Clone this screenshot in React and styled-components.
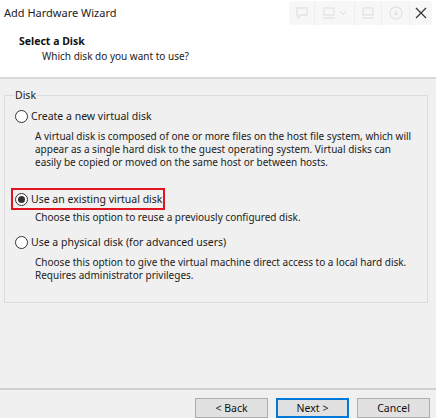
import React from 'react';
import styled, { createGlobalStyle } from 'styled-components';

const Global = createGlobalStyle`
  html, body {
    margin: 0;
    padding: 0;
    background: #f0f0f0;
  }
  body {
    font-family: "Noto Sans", "Open Sans", sans-serif;
    font-size: 10px;
    letter-spacing: 0;
    color: #1a1a1a;
  }
`;

const Window = styled.div`
  width: 436px;
  height: 418px;
  display: flex;
  flex-direction: column;
  overflow: hidden;
  background: #f0f0f0;
`;

const Top = styled.div`
  background: #fff;
  height: 77px;
  border-bottom: 2px solid #d9d9d9;
  display: flex;
  flex-direction: column;
`;

const TitleBar = styled.div`
  height: 25px;
  display: flex;
  align-items: center;
  padding-left: 4px;
  position: relative;
`;

const TitleText = styled.span`
  font-size: 11px;
  color: #222;
  margin-top: -1px;
`;

const Overlay = styled.div`
  position: absolute;
  right: 4px;
  top: 1px;
  height: 24px;
  width: 143px;
  border-radius: 4px;
  background: #f7f7f7;
  display: flex;
  align-items: center;
`;

const OverlayCell = styled.div`
  height: 100%;
  width: ${p => p.w}px;
  display: flex;
  align-items: center;
  justify-content: center;
  gap: 3px;
  border-right: ${p => (p.last ? 'none' : '1px solid #efefef')};
`;

const Header = styled.div`
  padding: 9px 0 0 19px;
`;

const HeaderTitle = styled.div`
  font-weight: bold;
  font-size: 10.5px;
  color: #111;
  line-height: 14px;
`;

const HeaderSub = styled.div`
  padding-left: 23px;
  line-height: 16px;
  color: #222;
`;

const Body = styled.div`
  flex: 1;
  padding: 9px 8px 0 4px;
`;

const Group = styled.fieldset`
  margin: 0;
  padding: 0 0 0 9px;
  height: 215px;
  border: 1px solid #dcdcdc;
  box-sizing: border-box;
`;

const Legend = styled.legend`
  padding: 0 1px;
  margin-left: 0;
  color: #222;
  font-size: 10.5px;
  line-height: 14px;
`;

const Option = styled.div`
  margin-top: ${p => p.top}px;
`;

const RadioLabel = styled.div`
  display: inline-flex;
  align-items: center;
  gap: 3px;
  padding: 2px 1px 2px 2px;
  border: 2px solid ${p => (p.highlight ? '#e0141e' : 'transparent')};
  margin-left: -3px;
  line-height: 14px;
  font-size: 10.5px;
`;

const Radio = styled.span`
  width: 11px;
  height: 11px;
  border-radius: 50%;
  border: 1px solid #333;
  background: #fff;
  display: inline-flex;
  align-items: center;
  justify-content: center;
  box-sizing: content-box;
  &::after {
    content: '';
    width: 7px;
    height: 7px;
    border-radius: 50%;
    background: ${p => (p.checked ? '#333' : 'transparent')};
  }
`;

const Desc = styled.div`
  padding-left: 21px;
  margin-top: ${p => p.gap ?? 3}px;
  line-height: 13px;
  color: #222;
  white-space: nowrap;
`;

const Footer = styled.div`
  border-top: 2px solid #d0d0d0;
  height: 20px;
  display: flex;
  justify-content: flex-end;
  align-items: flex-start;
  gap: 8px;
  padding: 8px 6px 0 0;
`;

const Button = styled.button`
  width: 73px;
  height: 20px;
  box-sizing: border-box;
  background: #e1e1e1;
  border: 1px solid ${p => (p.primary ? '#0078d7' : '#adadad')};
  box-shadow: ${p => (p.primary ? 'inset 0 0 0 1px #0078d7' : 'none')};
  font-family: inherit;
  font-size: 10.5px;
  letter-spacing: inherit;
  color: #111;
  padding: 0;
`;

const Bubble = () => (
  <svg width="14" height="14" viewBox="0 0 14 14" fill="none" stroke="#e4e4e4" strokeWidth="1.3">
    <path d="M2 2h10v7H6l-3 3V9H2z" />
  </svg>
);

const Screen = () => (
  <svg width="14" height="14" viewBox="0 0 14 14" fill="none" stroke="#e4e4e4" strokeWidth="1.3">
    <rect x="2" y="2" width="10" height="7" />
    <path d="M1 12h12" />
  </svg>
);

const Chevron = () => (
  <svg width="8" height="8" viewBox="0 0 8 8" fill="none" stroke="#e4e4e4" strokeWidth="1.2">
    <path d="M1 2.5l3 3 3-3" />
  </svg>
);

const Download = () => (
  <svg width="14" height="14" viewBox="0 0 14 14" fill="none" stroke="#e4e4e4" strokeWidth="1.3">
    <circle cx="7" cy="7" r="6" />
    <path d="M7 4v5M4.8 7l2.2 2.2L9.2 7" />
  </svg>
);

const Close = () => (
  <svg width="12" height="12" viewBox="0 0 12 12" fill="none" stroke="#333" strokeWidth="1.2">
    <path d="M1 1l10 10M11 1L1 11" />
  </svg>
);

export default function App() {
  return (
    <Window>
      <Global />
      <Top>
        <TitleBar>
          <TitleText>Add Hardware Wizard</TitleText>
          <Overlay>
            <OverlayCell w={26}><Bubble /></OverlayCell>
            <OverlayCell w={40}><Screen /><Chevron /></OverlayCell>
            <OverlayCell w={27}><Screen /></OverlayCell>
            <OverlayCell w={27}><Download /></OverlayCell>
            <OverlayCell w={23} last><Close /></OverlayCell>
          </Overlay>
        </TitleBar>
        <Header>
          <HeaderTitle>Select a Disk</HeaderTitle>
          <HeaderSub>Which disk do you want to use?</HeaderSub>
        </Header>
      </Top>
      <Body>
        <Group>
          <Legend>Disk</Legend>
          <Option top={3}>
            <RadioLabel><Radio />Create a new virtual disk</RadioLabel>
            <Desc>
              A virtual disk is composed of one or more files on the host file system, which will
              <br />appear as a single hard disk to the guest operating system. Virtual disks can
              <br />easily be copied or moved on the same host or between hosts.
            </Desc>
          </Option>
          <Option top={19}>
            <RadioLabel highlight><Radio checked />Use an existing virtual disk</RadioLabel>
            <Desc gap={1}>Choose this option to reuse a previously configured disk.</Desc>
          </Option>
          <Option top={7}>
            <RadioLabel><Radio />Use a physical disk (for advanced users)</RadioLabel>
            <Desc>
              Choose this option to give the virtual machine direct access to a local hard disk.
              <br />Requires administrator privileges.
            </Desc>
          </Option>
        </Group>
      </Body>
      <Footer>
        <Button>&lt; Back</Button>
        <Button primary>Next &gt;</Button>
        <Button>Cancel</Button>
      </Footer>
    </Window>
  );
}
